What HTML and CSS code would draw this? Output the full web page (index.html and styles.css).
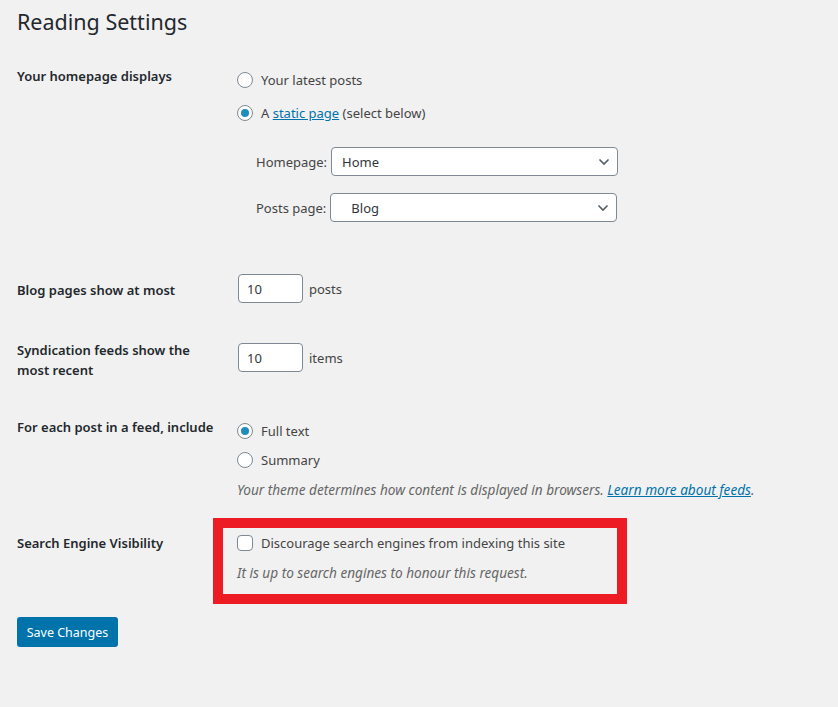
FILE: index.html
```html
<!DOCTYPE html>
<html>
<head>
<meta charset="utf-8">
<link rel="stylesheet" href="styles.css">
</head>
<body>
<div class="wrap">
  <h1 class="title">Reading Settings</h1>
  <form class="form">
    <div class="row row-home">
      <div class="th">Your homepage displays</div>
      <div class="td">
        <label class="opt"><span class="radio"></span>Your latest posts</label>
        <label class="opt opt-2"><span class="radio checked"></span>A&nbsp;<a class="link" href="#">static page</a>&nbsp;(select below)</label>
        <div class="sel-row sel-first">
          <span class="sel-label">Homepage:</span>
          <span class="select sel-home"><span class="sel-text">Home</span><svg class="chev" width="12" height="8" viewBox="0 0 12 8"><path d="M1.5 1.5 L6 6 L10.5 1.5" fill="none" stroke="#555d66" stroke-width="1.6"/></svg></span>
        </div>
        <div class="sel-row sel-second">
          <span class="sel-label">Posts page:</span>
          <span class="select sel-posts"><span class="sel-text indent">Blog</span><svg class="chev" width="12" height="8" viewBox="0 0 12 8"><path d="M1.5 1.5 L6 6 L10.5 1.5" fill="none" stroke="#555d66" stroke-width="1.6"/></svg></span>
        </div>
      </div>
    </div>

    <div class="row row-blog">
      <div class="th">Blog pages show at most</div>
      <div class="td inline">
        <span class="num">10</span><span class="unit">posts</span>
      </div>
    </div>

    <div class="row row-synd">
      <div class="th">Syndication feeds show the most recent</div>
      <div class="td inline">
        <span class="num">10</span><span class="unit">items</span>
      </div>
    </div>

    <div class="row row-feed">
      <div class="th">For each post in a feed, include</div>
      <div class="td">
        <label class="opt"><span class="radio checked"></span>Full text</label>
        <label class="opt opt-sum"><span class="radio"></span>Summary</label>
        <p class="desc">Your theme determines how content is displayed in browsers. <a class="link" href="#">Learn more about feeds</a>.</p>
      </div>
    </div>

    <div class="row row-search">
      <div class="th">Search Engine Visibility</div>
      <div class="td highlight-host">
        <label class="opt"><span class="check"></span>Discourage search engines from indexing this site</label>
        <p class="desc">It is up to search engines to honour this request.</p>
        <div class="highlight"></div>
      </div>
    </div>

    <div class="actions">
      <span class="button">Save Changes</span>
    </div>
  </form>
</div>
</body>
</html>
```

FILE: styles.css
```css
html, body {
  margin: 0;
  padding: 0;
  background: #f1f1f1;
}
body {
  font-family: "Noto Sans", "Open Sans", sans-serif;
  font-size: 13px;
  color: #444;
}
.wrap {
  padding: 0 0 0 17px;
}
.title {
  margin: 0;
  padding-top: 7px;
  font-size: 21.5px;
  line-height: 30px;
  font-weight: 400;
  color: #23282d;
}
.form {
  margin: 0;
}
.row {
  display: flex;
  align-items: flex-start;
}
.th {
  width: 220px;
  flex: none;
  box-sizing: border-box;
  padding-right: 20px;
  font-weight: 600;
  color: #23282d;
  line-height: 20px;
}
.td {
  line-height: 20px;
}
.opt {
  display: flex;
  align-items: center;
  height: 20px;
}
.radio {
  width: 16px;
  height: 16px;
  box-sizing: border-box;
  border: 1px solid #7e8993;
  border-radius: 50%;
  background: #fff;
  margin-right: 8px;
  display: inline-flex;
  align-items: center;
  justify-content: center;
  flex: none;
}
.radio.checked::before {
  content: "";
  width: 8px;
  height: 8px;
  border-radius: 50%;
  background: #1e8cbe;
}
.check {
  width: 16px;
  height: 16px;
  box-sizing: border-box;
  border: 1px solid #7e8993;
  border-radius: 4px;
  background: #fff;
  margin-right: 8px;
  flex: none;
}
.link {
  color: #0073aa;
  text-decoration: underline;
}

/* Row 1 */
.row-home .th { margin-top: 29px; }
.row-home .td { margin-top: 33px; }
.opt-2 { margin-top: 13px; }
.sel-row {
  display: flex;
  align-items: center;
  padding-left: 19px;
}
.sel-first { margin-top: 24px; }
.sel-second { margin-top: 17px; }
.sel-label {
  margin-right: 4px;
}
.select {
  width: 287px;
  height: 29px;
  box-sizing: border-box;
  border: 1px solid #7e8993;
  border-radius: 4px;
  background: #fff;
  display: flex;
  align-items: center;
  justify-content: space-between;
  padding: 0 7px 0 10px;
  color: #32373c;
}
.sel-text.indent { padding-left: 10px; }
.chev { display: block; }

/* Row 2 */
.inline {
  display: flex;
  align-items: center;
}
.num {
  width: 65px;
  height: 29px;
  box-sizing: border-box;
  border: 1px solid #7e8993;
  border-radius: 4px;
  background: #fff;
  padding-left: 8px;
  display: flex;
  align-items: center;
  color: #32373c;
}
.unit {
  margin-left: 6px;
}
.row-blog .th { margin-top: 58px; }
.row-blog .td { margin-top: 52px; margin-left: 1px; }

/* Row 3 */
.row-synd .th { margin-top: 37px; }
.row-synd .td { margin-top: 40px; margin-left: 1px; }

/* Row 4 */
.row-feed .th { margin-top: 37px; }
.row-feed .td { margin-top: 41px; }
.opt-sum { margin-top: 9px; }
.desc {
  margin: 10px 0 0 0;
  font-style: italic;
  font-size: 13.6px;
  color: #666;
  line-height: 20px;
}

/* Row 5 */
.row-search .th { margin-top: 33px; }
.row-search .td { margin-top: 33px; }
.highlight-host { position: relative; }
.highlight {
  position: absolute;
  left: -24px;
  top: -15px;
  width: 414px;
  height: 86px;
  box-sizing: border-box;
  border: 10px solid #ed1c24;
  pointer-events: none;
}

.actions {
  margin-top: 34px;
}
.button {
  display: inline-flex;
  align-items: center;
  justify-content: center;
  width: 101px;
  height: 30px;
  box-sizing: border-box;
  background: #0073aa;
  border-radius: 3px;
  color: #fff;
  font-size: 12.5px;
}
```
